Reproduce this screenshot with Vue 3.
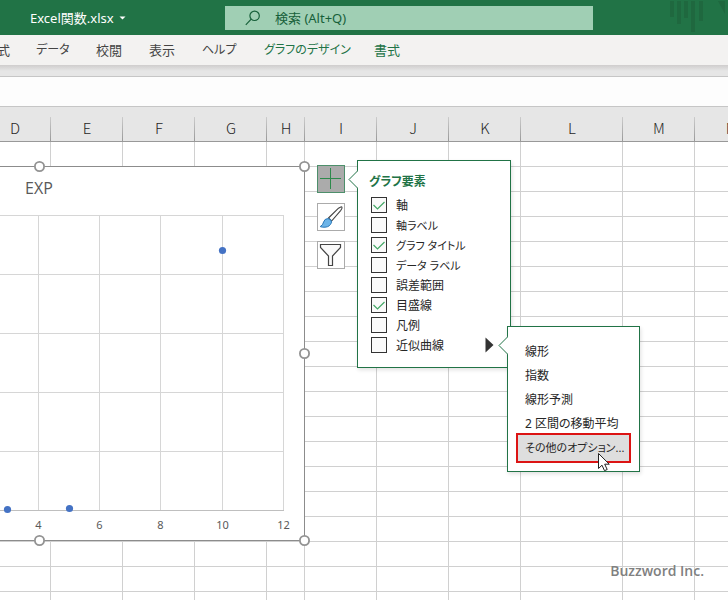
<script setup>
import { ref } from 'vue'

const tabs = [
  { label: '数式' },
  { label: 'データ' },
  { label: '校閲' },
  { label: '表示' },
  { label: 'ヘルプ' },
  { label: 'グラフのデザイン', context: true },
  { label: '書式', context: true }
]

const columns = ['D', 'E', 'F', 'G', 'H', 'I', 'J', 'K', 'L', 'M', 'N', 'O', 'P', 'Q']
const narrow = 'H'
const wide = 'L'
const rowCount = 40

const elements = ref([
  { id: 'axes', label: '軸', on: true },
  { id: 'axis-titles', label: '軸ラベル', on: false },
  { id: 'chart-title', label: 'グラフ タイトル', on: true },
  { id: 'data-labels', label: 'データ ラベル', on: false },
  { id: 'error-bars', label: '誤差範囲', on: false },
  { id: 'gridlines', label: '目盛線', on: true },
  { id: 'legend', label: '凡例', on: false },
  { id: 'trendline', label: '近似曲線', on: false, more: true }
])

const trendlines = ['線形', '指数', '線形予測', '2 区間の移動平均', 'その他のオプション...']

// Labels made mostly of katakana are set one size smaller.
const isKana = (label) => /[ァ-ヶー]{3}/.test(label)

const ticks = [
  { x: 38, value: 4 },
  { x: 99, value: 6 },
  { x: 160, value: 8 },
  { x: 222, value: 10 },
  { x: 283, value: 12 }
]
const levels = [55, 114, 173, 232, 291]
const points = [
  { x: 7, y: 349 },
  { x: 69, y: 348 },
  { x: 222, y: 90 }
]
const handles = [
  { x: 39, y: 6 },
  { x: 304, y: 6 },
  { x: 304, y: 193 },
  { x: 39, y: 380 },
  { x: 304, y: 380 }
]
</script>

<template>
  <div class="app">
    <header class="titlebar">
      <button class="filename" type="button">
        Excel関数.xlsx
        <svg width="7" height="4" viewBox="0 0 7 4"><path d="M0.5 0.5h6L3.5 3.5z" fill="#fff" /></svg>
      </button>
      <label class="search">
        <svg width="16" height="16" viewBox="0 0 16 16" fill="none" stroke="#17603a" stroke-width="1.2">
          <circle cx="9.6" cy="5.8" r="4.7" />
          <path d="M6.2 9.1L0.8 14.8" />
        </svg>
        <input type="text" placeholder="検索 (Alt+Q)" aria-label="検索" />
      </label>
      <svg class="ornament" width="60" height="35" viewBox="0 0 60 35" fill="#1f683f">
        <path d="M2 1h4v16h-4zM9 1h4v23h-4zM16 1h4v17h-4zM23 1h4v31h-4zM31 1h4v20h-4zM50 1h7v13z" />
      </svg>
    </header>

    <nav class="ribbon">
      <a
        v-for="t in tabs" :key="t.label" href="#"
        :class="{ context: t.context, kana: isKana(t.label) }"
      >{{ t.label }}</a>
    </nav>
    <div class="shade"></div>
    <div class="formula"></div>

    <main class="sheet">
      <table class="cells">
        <colgroup>
          <col v-for="c in columns" :key="c" :class="{ narrow: c === narrow, wide: c === wide }" />
        </colgroup>
        <thead>
          <tr>
            <th v-for="c in columns" :key="c" scope="col">{{ c }}</th>
          </tr>
        </thead>
        <tbody>
          <tr v-for="r in rowCount" :key="r">
            <td v-for="c in columns" :key="c"></td>
          </tr>
        </tbody>
      </table>

      <svg class="chart" width="312" height="388" viewBox="0 0 312 388">
        <rect x="-10" y="6.5" width="314.5" height="374" fill="#fff" stroke="#8c8c8c" />
        <g stroke="#d6d6d6">
          <line v-for="y in levels" :key="y" x1="0" x2="284" :y1="y + 0.5" :y2="y + 0.5" />
          <line v-for="t in ticks" :key="t.x" :x1="t.x + 0.5" :x2="t.x + 0.5" y1="55" y2="350" />
        </g>
        <line x1="0" x2="284" y1="350.5" y2="350.5" stroke="#bfbfbf" />
        <text class="chart-title" x="39" y="34">EXP</text>
        <text v-for="t in ticks" :key="t.value" class="tick" :x="t.x + 0.5" y="369">{{ t.value }}</text>
        <circle v-for="p in points" :key="p.x" :cx="p.x + 0.5" :cy="p.y + 0.5" r="3.6" fill="#4472c4" />
        <circle
          v-for="(h, i) in handles" :key="i" :cx="h.x + 0.5" :cy="h.y + 0.5" r="4.6"
          fill="#fff" stroke="#939393" stroke-width="1.8"
        />
      </svg>

      <div class="tools">
        <button type="button" class="tool active" aria-label="グラフ要素">
          <svg width="26" height="26" viewBox="0 0 26 26"><path d="M12.5 2v21M2 12.5h21" stroke="#2d8a4c" fill="none" /></svg>
        </button>
        <button type="button" class="tool" aria-label="グラフ スタイル">
          <svg width="26" height="26" viewBox="0 0 26 26">
            <path d="M10.5 14L20.5 4.2Q23.5 2.3 24 3.2T22.6 6.6L13.6 17z" fill="#fff" stroke="#444" stroke-width="1.1" />
            <path d="M2.2 22.6Q5 21.2 5.6 18Q6.6 14.6 10 14.6Q13.6 15.2 13.6 18.2Q12 23 7 23.2Q4 23.4 2.2 22.6z" fill="#6cb4e8" stroke="#2b78b8" />
          </svg>
        </button>
        <button type="button" class="tool" aria-label="グラフ フィルター">
          <svg width="26" height="26" viewBox="0 0 26 26">
            <path d="M2.5 2.5h20v3l-8 8.5v9.5h-4V14l-8-8.5z" fill="#fafafa" stroke="#444" stroke-width="1.2" />
          </svg>
        </button>
      </div>

      <section class="panel elements">
        <svg class="notch" width="10" height="19" viewBox="0 0 10 19">
          <path d="M10 0.5L1 9.5L10 18.5" fill="#fff" stroke="#217346" />
        </svg>
        <h2>グラフ要素</h2>
        <ul>
          <li v-for="e in elements" :key="e.id">
            <input :id="e.id" v-model="e.on" type="checkbox" />
            <label :for="e.id" :class="{ kana: isKana(e.label) }">{{ e.label }}</label>
            <svg v-if="e.more" class="more" width="9" height="16" viewBox="0 0 9 16"><path d="M0.5 0.5v15L8.5 8z" fill="#333" /></svg>
          </li>
        </ul>
      </section>

      <section class="panel trend">
        <svg class="notch" width="10" height="19" viewBox="0 0 10 19">
          <path d="M10 0.5L1 9.5L10 18.5" fill="#fff" stroke="#217346" />
        </svg>
        <button
          v-for="(t, i) in trendlines" :key="t" type="button"
          :class="{ picked: i === 4, kana: isKana(t) }"
        >{{ t }}</button>
        <svg class="pointer" width="14" height="20" viewBox="0 0 14 20">
          <path d="M1.5 1.5v15l3.5-3.3 2.5 5.5 2.7-1.2-2.5-5.3h4.6z" fill="#fff" stroke="#222" />
        </svg>
      </section>

      <p class="credit">Buzzword Inc.</p>
    </main>
  </div>
</template>

<style>
body {
  margin: 0;
}
</style>

<style scoped>
.app {
  height: 100vh;
  display: flex;
  flex-direction: column;
  overflow: hidden;
  background: #fff;
  color: #262626;
  font: 12px/20px "Noto Sans", "Noto Sans CJK JP", sans-serif;
  font-feature-settings: "palt";
}
button,
input {
  font: inherit;
  font-feature-settings: inherit;
  color: inherit;
  margin: 0;
}
.titlebar {
  flex: none;
  height: 35px;
  display: grid;
  grid-template-columns: 225px minmax(0, 1fr) 135px;
  align-items: center;
  background: #217346;
  color: #fff;
  font-size: 13px;
}
.filename {
  display: flex;
  align-items: center;
  justify-self: start;
  gap: 5px;
  padding: 0 0 0 30px;
  border: 0;
  background: none;
}
.search {
  display: flex;
  align-items: center;
  gap: 14px;
  height: 24px;
  padding-left: 20px;
  background: #a0cfb4;
  color: #17603a;
}
.search input {
  flex: 1;
  min-width: 0;
  padding: 0;
  border: 0;
  outline: 0;
  background: none;
}
.search input::placeholder {
  color: #17603a;
  opacity: 1;
}
.ornament {
  justify-self: end;
}
.ribbon {
  flex: none;
  display: grid;
  grid-template-columns: 52px 60px 53px 53px 62px 110px auto;
  align-items: center;
  height: 30px;
  margin-left: -16px;
  background: #f3f2f1;
  font-size: 13px;
}
.ribbon a {
  color: #444;
  text-decoration: none;
  white-space: nowrap;
}
.ribbon a.context {
  color: #217346;
}
.ribbon .kana {
  font-size: 12px;
}
.panel .kana {
  font-size: 11px;
}
.shade {
  flex: none;
  height: 11px;
  background: linear-gradient(#cfcdcd, #e6e6e6 6px);
}
.formula {
  flex: none;
  height: 29px;
  border-top: 1px solid #c6c6c6;
  border-bottom: 1px solid #c6c6c6;
  background: #fdfdfd;
}
.sheet {
  position: relative;
  flex: 1;
  min-height: 0;
  overflow: hidden;
}
.cells {
  table-layout: fixed;
  width: 980px;
  margin-left: -21px;
  border-spacing: 0;
}
col {
  width: 72px;
}
col.narrow {
  width: 38px;
}
col.wide {
  width: 102px;
}
th,
td {
  box-sizing: border-box;
  padding: 0;
  border-right: 1px solid #d0d0d0;
  border-bottom: 1px solid #d0d0d0;
}
th {
  height: 35px;
  padding-top: 7px;
  border-right: 0;
  border-bottom-color: #999;
  background:
    linear-gradient(#ccc, #999) right bottom / 1px 24px no-repeat,
    #e6e6e6;
  font: 300 15px/24px "Noto Sans CJK JP", sans-serif;
}
td {
  height: 25px;
}
.chart {
  position: absolute;
  left: 0;
  top: 53px;
}
.chart text {
  fill: #595959;
  text-anchor: middle;
}
.chart-title {
  font: 16px "Open Sans", sans-serif;
}
.tick {
  font: 11px "Noto Sans", sans-serif;
}
.tools {
  position: absolute;
  left: 317px;
  top: 58px;
  display: grid;
  gap: 10px;
}
.tool {
  display: block;
  width: 28px;
  height: 28px;
  padding: 0;
  border: 1px solid #ababab;
  background: #fff;
}
.tool svg {
  display: block;
}
.tool.active {
  border-color: #4d8f6b;
  background: #ababab;
}
.panel {
  position: absolute;
  box-sizing: border-box;
  border: 1px solid #217346;
  background: #fff;
  box-shadow: 1px 2px 4px rgba(0, 0, 0, 0.12);
}
.notch {
  position: absolute;
  left: -10px;
}
.elements {
  left: 357px;
  top: 53px;
  width: 154px;
  padding: 11px 16px 12px 11px;
}
.elements .notch {
  top: 9px;
}
h2 {
  margin: 0 0 3px;
  color: #217346;
  font-size: 12px;
  font-weight: 700;
  line-height: 20px;
}
ul {
  margin: 0;
  padding: 0;
  list-style: none;
}
li {
  display: flex;
  align-items: center;
  height: 20px;
  padding-left: 2px;
}
li label {
  flex: 1;
  padding: 2px 0 0 9px;
}
li input {
  appearance: none;
  width: 16px;
  height: 16px;
  border: 1px solid #333;
  background: #fafafa;
}
li input:checked {
  background: #fafafa url("data:image/svg+xml,%3Csvg xmlns='http://www.w3.org/2000/svg' viewBox='0 0 14 14'%3E%3Cpath d='M1.5 7l4 4 7-7' fill='none' stroke='%2344a866' stroke-width='1.2'/%3E%3C/svg%3E");
}
.trend {
  left: 507px;
  top: 219px;
  width: 133px;
  padding: 13px 8px 11px;
}
.trend .notch {
  top: 9px;
}
.trend button {
  display: block;
  width: 100%;
  height: 24px;
  padding: 0 0 0 9px;
  border: 0;
  background: none;
  text-align: left;
  white-space: nowrap;
}
.trend .picked {
  height: 30px;
  margin: -3px 0;
  padding-left: 7px;
  border: 2px solid #dc1414;
  background: #dedede;
}
.pointer {
  position: absolute;
  left: 89px;
  top: 125px;
}
.credit {
  position: absolute;
  right: 24px;
  bottom: 19px;
  margin: 0;
  color: #808080;
  font: 600 14px/20px "Open Sans", sans-serif;
}
</style>
